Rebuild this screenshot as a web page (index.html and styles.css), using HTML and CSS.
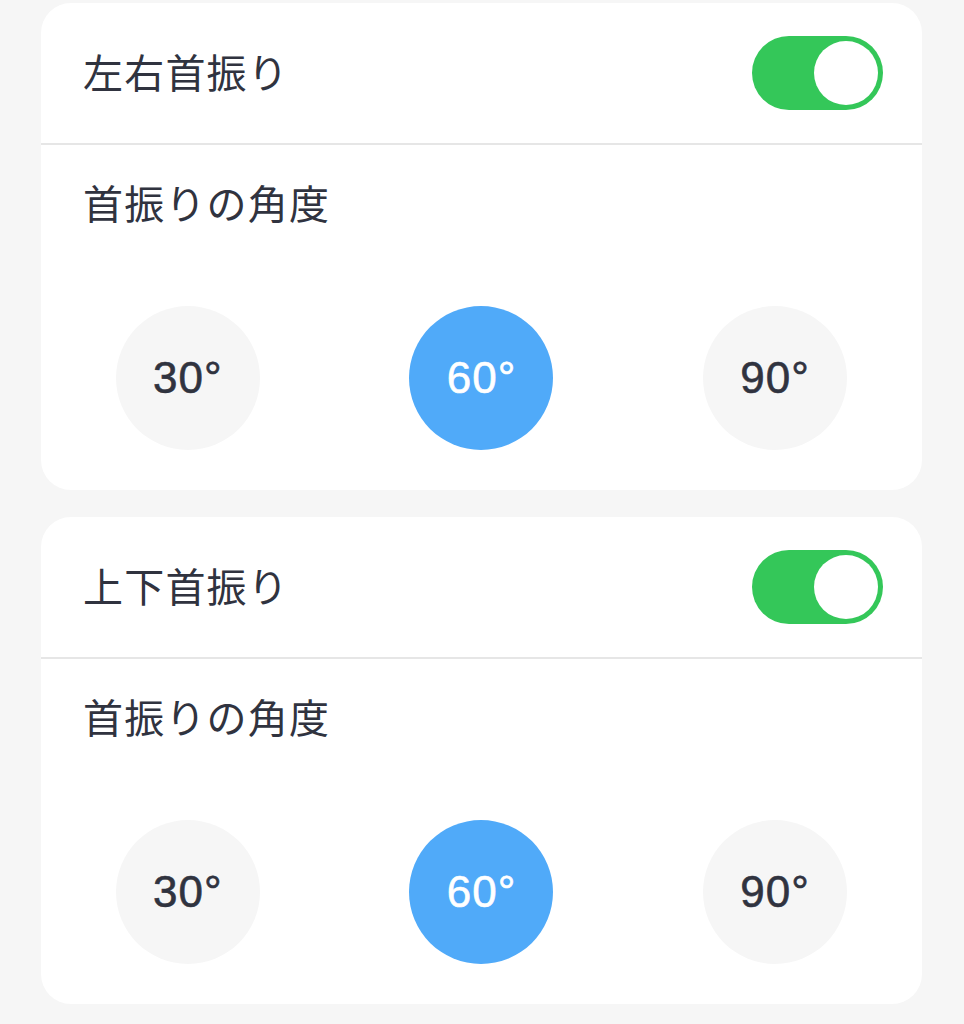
FILE: index.html
```html
<!DOCTYPE html>
<html lang="ja">
<head>
<meta charset="utf-8">
<link rel="stylesheet" href="styles.css">
</head>
<body>
<main class="page">
  <section class="card">
    <div class="row">
      <span class="title">左右首振り</span>
      <span class="toggle on"><span class="knob"></span></span>
    </div>
    <div class="section">
      <div class="heading">首振りの角度</div>
      <div class="options">
        <span class="opt">30°</span>
        <span class="opt active">60°</span>
        <span class="opt">90°</span>
      </div>
    </div>
  </section>
  <section class="card">
    <div class="row">
      <span class="title">上下首振り</span>
      <span class="toggle on"><span class="knob"></span></span>
    </div>
    <div class="section">
      <div class="heading">首振りの角度</div>
      <div class="options">
        <span class="opt">30°</span>
        <span class="opt active">60°</span>
        <span class="opt">90°</span>
      </div>
    </div>
  </section>
</main>
</body>
</html>
```

FILE: styles.css
```css
html, body {
  margin: 0;
  padding: 0;
  background: #f6f6f6;
}
body {
  font-family: "Noto Sans CJK JP", "Noto Sans", sans-serif;
  color: #30333f;
}
.page {
  display: flex;
  flex-direction: column;
  gap: 27px;
  padding: 3px 42px 0 41px;
}
.card {
  background: #ffffff;
  border-radius: 30px;
  overflow: hidden;
}
.row {
  height: 140px;
  display: flex;
  align-items: center;
  justify-content: space-between;
  padding: 0 39px 0 42px;
  border-bottom: 2px solid #e6e6e6;
}
.title, .heading {
  font-size: 40px;
  line-height: 40px;
  letter-spacing: 1.2px;
}
.title {
  padding-bottom: 5px;
}
.toggle {
  width: 131px;
  height: 74px;
  border-radius: 37px;
  background: #e5e5ea;
  display: flex;
  align-items: center;
  padding: 0 5px;
  box-sizing: border-box;
}
.toggle.on {
  background: #34c759;
  justify-content: flex-end;
}
.knob {
  width: 64px;
  height: 64px;
  border-radius: 50%;
  background: #ffffff;
}
.section {
  padding: 37px 0 40px;
}
.heading {
  padding-left: 42px;
}
.options {
  margin-top: 84px;
  display: flex;
  justify-content: space-around;
}
.opt {
  width: 144px;
  height: 144px;
  border-radius: 50%;
  background: #f6f6f6;
  display: flex;
  align-items: center;
  justify-content: center;
  font-family: "Liberation Sans", Arial, sans-serif;
  font-size: 44px;
  letter-spacing: 1px;
  -webkit-text-stroke: 0.6px currentColor;
}
.opt.active {
  background: #50aaf9;
  color: #ffffff;
}
```
